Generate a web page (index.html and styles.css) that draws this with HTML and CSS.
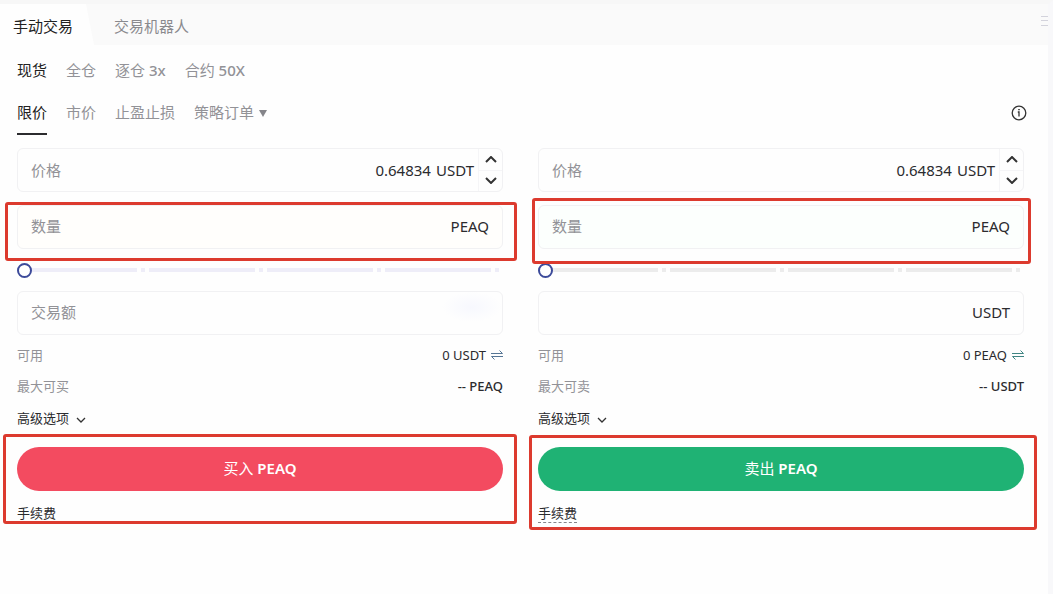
FILE: index.html
```html
<!DOCTYPE html>
<html lang="zh-CN">
<head>
    <meta charset="UTF-8">
    <meta name="viewport" content="width=device-width, initial-scale=1.0">
    <title>PEAQ/USDT</title>
    <link rel="stylesheet" href="styles.css">
</head>
<body>
    <div class="panel">
        <header class="tabs">
            <button class="tab active" type="button">手动交易</button>
            <button class="tab" type="button">交易机器人</button>
            <svg class="menu-icon" width="7" height="12" viewBox="0 0 7 12" stroke="#d3d3dc" stroke-width="1"><path d="M0 1.500h7M0 5.500h7M0 10.500h7"/></svg>
        </header>

        <main class="content">
            <nav class="modes">
                <a class="mode active" href="#">现货</a>
                <a class="mode" href="#">全仓</a>
                <a class="mode" href="#">逐仓 <b>3x</b></a>
                <a class="mode" href="#">合约 <b>50X</b></a>
            </nav>

            <nav class="types">
                <a class="type active" href="#">限价</a>
                <a class="type" href="#">市价</a>
                <a class="type" href="#">止盈止损</a>
                <a class="type" href="#">策略订单<svg class="caret" width="8" height="7" viewBox="0 0 8 7"><path d="M0 0h8L4 7z" fill="#85858a"/></svg></a>
                <button class="info" type="button" aria-label="说明">
                    <svg width="16" height="16" viewBox="0 0 16 16" fill="none" stroke="#333" stroke-width="1.300"><circle cx="8" cy="8" r="6.800"/><path d="M6.800 7H8v4.500"/><path d="M7.200 4.700h1.600"/></svg>
                </button>
            </nav>

            <div class="forms">
                <!-- Buy -->
                <form class="order buy">
                    <div class="field price">
                        <label for="buyPrice">价格</label>
                        <input id="buyPrice" type="text" value="0.64834">
                        <span class="unit">USDT</span>
                        <div class="stepper">
                            <button type="button" aria-label="+"><svg width="12" height="7" viewBox="0 0 12 7"><path d="M1 6l5-5 5 5"/></svg></button>
                            <button type="button" aria-label="-"><svg width="12" height="7" viewBox="0 0 12 7"><path d="M1 1l5 5 5-5"/></svg></button>
                        </div>
                    </div>
                    <div class="amount">
                        <div class="field">
                            <label for="buyQty">数量</label>
                            <input id="buyQty" type="text">
                            <span class="unit">PEAQ</span>
                        </div>
                        <span class="mark mark-amount"></span>
                    </div>
                    <input class="slider" type="range" min="0" max="100" value="0" aria-label="%">
                    <div class="field">
                        <label for="buyTotal">交易额</label>
                        <input id="buyTotal" type="text">
                        <span class="haze"></span>
                    </div>
                    <div class="row available">
                        <span class="name">可用</span>
                        <span>0 USDT</span>
                        <svg width="12" height="10" viewBox="0 0 12 10" fill="none" stroke="#557595"><path d="M0 3.500h11.500L8.500 .5M12 6.500H.5l3 3"/></svg>
                    </div>
                    <div class="row max">
                        <span class="name">最大可买</span>
                        <span>-- PEAQ</span>
                    </div>
                    <button class="advanced" type="button">高级选项<svg width="10" height="6" viewBox="0 0 10 6"><path d="M1 1l4 4 4-4"/></svg></button>
                    <div class="action">
                        <button class="submit" type="button">买入 <b>PEAQ</b></button>
                        <a class="fee" href="#">手续费</a>
                        <span class="mark mark-action"></span>
                    </div>
                </form>

                <!-- Sell -->
                <form class="order sell">
                    <div class="field price">
                        <label for="sellPrice">价格</label>
                        <input id="sellPrice" type="text" value="0.64834">
                        <span class="unit">USDT</span>
                        <div class="stepper">
                            <button type="button" aria-label="+"><svg width="12" height="7" viewBox="0 0 12 7"><path d="M1 6l5-5 5 5"/></svg></button>
                            <button type="button" aria-label="-"><svg width="12" height="7" viewBox="0 0 12 7"><path d="M1 1l5 5 5-5"/></svg></button>
                        </div>
                    </div>
                    <div class="amount">
                        <div class="field">
                            <label for="sellQty">数量</label>
                            <input id="sellQty" type="text">
                            <span class="unit">PEAQ</span>
                        </div>
                        <span class="mark mark-amount"></span>
                    </div>
                    <input class="slider" type="range" min="0" max="100" value="0" aria-label="%">
                    <div class="field">
                        <input id="sellTotal" type="text" aria-label="交易额">
                        <span class="unit">USDT</span>
                    </div>
                    <div class="row available">
                        <span class="name">可用</span>
                        <span>0 PEAQ</span>
                        <svg width="12" height="10" viewBox="0 0 12 10" fill="none" stroke="#3f8583"><path d="M0 3.500h11.500L8.500 .5M12 6.500H.5l3 3"/></svg>
                    </div>
                    <div class="row max">
                        <span class="name">最大可卖</span>
                        <span>-- USDT</span>
                    </div>
                    <button class="advanced" type="button">高级选项<svg width="10" height="6" viewBox="0 0 10 6"><path d="M1 1l4 4 4-4"/></svg></button>
                    <div class="action">
                        <button class="submit" type="button">卖出 <b>PEAQ</b></button>
                        <a class="fee" href="#">手续费</a>
                        <span class="mark mark-action"></span>
                    </div>
                </form>
            </div>
        </main>
    </div>
</body>
</html>
```

FILE: styles.css
```css
* {
    box-sizing: border-box;
}
body {
    margin: 0;
    background-color: #fefefe;
    font-family: "Noto Sans", "Noto Sans CJK SC", sans-serif;
    font-size: 15px;
    line-height: 20px;
    color: #2b2b2e;
}
a {
    color: inherit;
    text-decoration: none;
}
button, input {
    font: inherit;
    color: inherit;
    border: none;
    background: none;
    padding: 0;
    margin: 0;
}
button {
    cursor: pointer;
}
.panel {
    min-height: 100vh;
    border-top: 4px solid #f7f7f7;
    border-right: 5px solid #f8f8fa;
}

/* Top tabs */
.tabs {
    display: flex;
    height: 41px;
    background-color: #fafafa;
}
.tab {
    padding: 2px 20px 0;
    color: #8a8a8e;
}
.tab.active {
    padding: 2px 21px 0 13px;
    color: #222;
    background-color: #fefefe;
    clip-path: polygon(0 0, 86px 0, 100% 100%, 0 100%);
}
.menu-icon {
    margin: 11px 0 0 auto;
}

.content {
    padding: 15px 24px 0 17px;
}
.modes, .types {
    display: flex;
    gap: 19px;
    color: #929297;
}
.mode b {
    font-weight: 500;
}
.mode.active, .type.active {
    color: #222;
}
.types {
    margin-top: 22px;
    height: 33px;
}
.type.active {
    border-bottom: 2px solid #2b2b2e;
}
.caret {
    margin-left: 5px;
    vertical-align: 1px;
}
.info {
    height: 16px;
    margin: 3px -3px 0 auto;
}
.info svg {
    display: block;
}

/* Order forms */
.forms {
    display: grid;
    grid-template-columns: 1fr 1fr;
    gap: 35px;
    margin-top: 13px;
}
.order {
    display: flex;
    flex-direction: column;
}
.field {
    display: flex;
    align-items: center;
    height: 44px;
    padding: 0 13px 2px;
    border: 1px solid #f1f1f3;
    border-radius: 6px;
    position: relative;
}
.field label {
    color: #929297;
}
.field input {
    flex: 1;
    min-width: 0;
    text-align: right;
    outline: none;
}
.unit {
    margin-left: 5px;
}
.price {
    padding-right: 0;
    padding-bottom: 0;
}
.stepper {
    display: flex;
    flex-direction: column;
    width: 24px;
    height: 100%;
    margin-left: 4px;
    border-left: 1px solid #f5f5f7;
}
.stepper button {
    flex: 1;
    display: flex;
    align-items: center;
    justify-content: center;
}
.stepper button + button {
    border-top: 1px solid #f5f5f7;
}
.stepper svg, .advanced svg {
    fill: none;
    stroke: #333;
    stroke-width: 2;
}
.amount {
    position: relative;
    margin-top: 13px;
}
.buy .amount .field {
    background-color: #fffefc;
}
.sell .amount .field {
    background-color: #fcfffd;
}

/* Percent slider, one tile of the track per 25% */
.slider {
    --track: #eeedf8;
    appearance: none;
    height: 16px;
    margin: 13px 0;
    background-image: linear-gradient(to right, var(--track) 4px, transparent 4px, transparent 8px, var(--track) 8px, var(--track) calc(100% - 4px), transparent calc(100% - 4px));
    background-size: calc((100% - 14px) / 4) 4px;
    background-position: 6px 6px;
    background-repeat: repeat-x;
}
.sell .slider {
    --track: #ececec;
}
.slider::-webkit-slider-thumb {
    appearance: none;
    width: 15px;
    height: 15px;
    border: 2px solid #3c4a9a;
    border-radius: 50%;
    background-color: #fff;
}

.row {
    display: flex;
    align-items: center;
    font-size: 13px;
}
.row .name {
    margin-right: auto;
    font-weight: 400;
    color: #929297;
}
.row svg {
    margin-left: 5px;
}
.available {
    margin-top: 10px;
}
.max {
    margin-top: 11px;
    font-weight: 500;
}
.advanced {
    align-self: flex-start;
    margin-top: 12px;
    font-size: 13px;
}
.advanced svg {
    margin-left: 7px;
    stroke-width: 1.3;
}
.action {
    display: flex;
    flex-direction: column;
    align-items: flex-start;
    margin-top: 19px;
    position: relative;
}
.submit {
    width: 100%;
    height: 44px;
    padding-bottom: 2px;
    border-radius: 22px;
    color: #fff;
}
.submit b {
    font-weight: 600;
}
.buy .submit {
    background-color: #f34b60;
}
.sell .submit {
    background-color: #1fb274;
}
.fee {
    margin-top: 13px;
    font-size: 13px;
    line-height: 18px;
    border-bottom: 1px dashed #85858a;
}

/* Red highlight boxes over the forms */
.mark {
    position: absolute;
    border: 3px solid #dc3a2e;
    border-radius: 3px;
    pointer-events: none;
}
.buy .mark-amount {
    inset: -3px -14px -12px -12px;
}
.sell .mark-amount {
    inset: -7px -7px -15px -6px;
}
.buy .mark-action {
    inset: -13px -14px -1px -14px;
}
.sell .mark-action {
    inset: -12px -13px -7px -9px;
}
/* faint watermark */
.haze {
    position: absolute;
    right: 0;
    top: 0;
    width: 60px;
    height: 30px;
    background: radial-gradient(closest-side, #f7f8fe, transparent);
}
```
